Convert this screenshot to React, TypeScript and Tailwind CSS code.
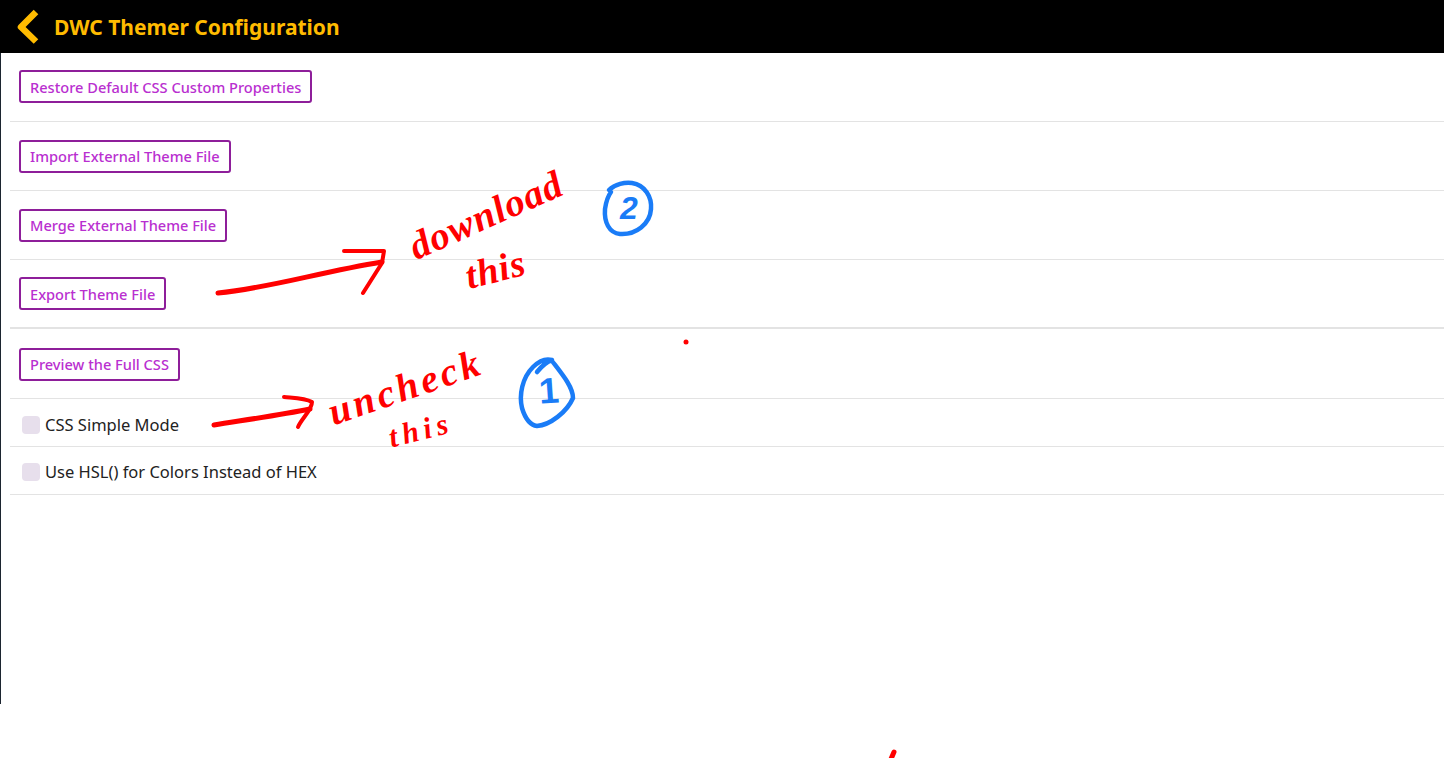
const buttons = [
  "Restore Default CSS Custom Properties",
  "Import External Theme File",
  "Merge External Theme File",
  "Export Theme File",
  "Preview the Full CSS",
];
const checks = ["CSS Simple Mode", "Use HSL() for Colors Instead of HEX"];

function Note({ className, children }: { className: string; children: React.ReactNode }) {
  return <span className={"absolute whitespace-nowrap font-bold " + className}>{children}</span>;
}

export default function App() {
  return (
    <div className="relative h-[758px] w-[1444px] overflow-hidden bg-white font-['Noto_Sans',sans-serif]">
      <header className="flex h-[53px] items-center gap-[14px] bg-black pl-[15px]">
        <svg width="25" height="36" viewBox="0 0 25 36">
          <path d="M21 3 L6 18 L21 32.5" fill="none" stroke="#ffbb00" strokeWidth="6.5" strokeLinejoin="round" />
        </svg>
        <h1 className="pt-[3px] text-[21px] font-bold text-[#ffbb00]">DWC Themer Configuration</h1>
      </header>

      <main className="h-[651px] border-l border-[#1c2530] pl-[9px]">
        {buttons.map((b, i) => (
          <div
            key={b}
            className={
              "flex items-center pl-[9px] " +
              (i === 3 ? "h-[69px] border-b-2 border-[#e3e3e3]" : "border-b border-[#e3e3e3]") +
              (i === 4 ? " h-[70px] pt-[1px]" : i === 0 ? " h-[69px] pb-[1px]" : " h-[69px]")
            }
          >
            <button className="h-[33px] rounded-[3px] border-2 border-[#8e1e9a] px-[9px] pt-[2px] text-[14.6px] font-medium text-[#b92fd0]">
              {b}
            </button>
          </div>
        ))}
        {checks.map((c, i) => (
          <label
            key={c}
            className={
              "flex h-[48px] items-center gap-[5px] border-b border-[#e3e3e3] pl-[12px] " +
              (i === 0 ? "pt-[5px]" : "pt-[3px]")
            }
          >
            <span className="h-[18px] w-[18px] rounded-[4px] bg-[#e7dfec]" />
            <span className="text-[16.5px] text-[#222222]">{c}</span>
          </label>
        ))}
      </main>

      <svg className="absolute left-0 top-0" width="1444" height="758" fill="none" strokeLinecap="round" strokeLinejoin="round">
        <g stroke="#ff0000">
          <path d="M218 293 C270 288 320 272 382 262" strokeWidth="5" />
          <path d="M344 251 L384 251 L382 263 L363 293" strokeWidth="4" />
          <path d="M214 425 C245 420 280 415 310 409" strokeWidth="5" />
          <path d="M284 397 C295 398 305 398 312 402 C312 410 302 418 298 427" strokeWidth="4" />
          <path d="M894 752 L891 759" strokeWidth="5" />
        </g>
        <circle cx="686" cy="342" r="2.5" fill="#ff0000" />
        <g stroke="#1a7cf7" strokeWidth="4.5">
          <path d="M609 190 C615 184 625 182 632 183 C645 185 652 197 651 209 C650 224 636 235 620 234 C609 233 604 222 605 209 C606 202 608 196 611 192" />
          <path d="M537 372 C541 367 546 362 552 360 C545 358 539 361 533 367 C522 378 519 395 522 408 C525 418 530 425 537 426 C550 425 567 412 573 398 C573 387 562 374 552 361" />
        </g>
      </svg>

      <Note className="left-[404px] top-[186px] rotate-[-24deg] font-['Liberation_Serif',serif] text-[39px] italic tracking-[1px] text-[#ff0000]">download</Note>
      <Note className="left-[465px] top-[241px] rotate-[-14deg] font-['Liberation_Serif',serif] text-[38px] italic tracking-[1px] text-[#ff0000]">this</Note>
      <Note className="left-[325px] top-[358px] rotate-[-19deg] font-['Liberation_Serif',serif] text-[39px] italic tracking-[3.5px] text-[#ff0000]">uncheck</Note>
      <Note className="left-[388px] top-[407px] rotate-[-14deg] font-['Liberation_Serif',serif] text-[30px] italic tracking-[5px] text-[#ff0000]">this</Note>
      <Note className="left-[620px] top-[190px] font-['Liberation_Sans',sans-serif] text-[32px] italic leading-[36px] text-[#1a7cf7]">2</Note>
      <Note className="left-[539px] top-[371px] rotate-[-4deg] font-['Liberation_Sans',sans-serif] text-[36px] leading-[40px] text-[#1a7cf7]">1</Note>
    </div>
  );
}
